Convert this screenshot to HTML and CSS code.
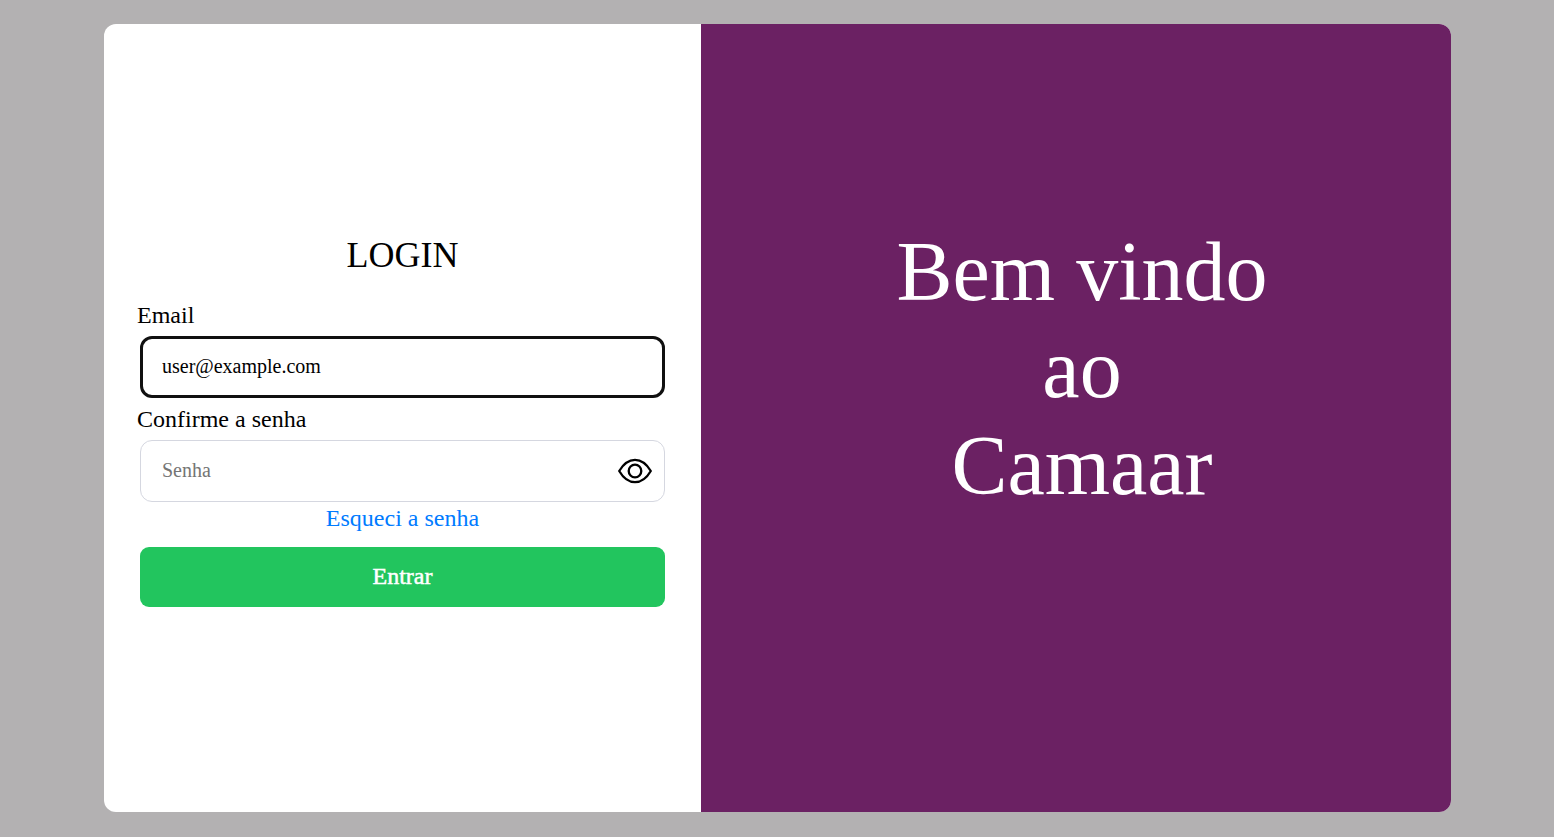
FILE: index.html
```html
<!DOCTYPE html>
<html lang="pt-BR">
<head>
<meta charset="utf-8">
<title>Login - Camaar</title>
<link rel="stylesheet" href="styles.css">
</head>
<body>
<main class="card">
  <section class="login">
    <h1 class="title">LOGIN</h1>
    <form class="form">
      <label class="label" for="email">Email</label>
      <input class="input input-active" id="email" type="email" value="user@example.com">
      <label class="label" for="senha">Confirme a senha</label>
      <div class="field">
        <input class="input" id="senha" type="password" placeholder="Senha">
        <button class="toggle" type="button" aria-label="Mostrar senha">
          <svg class="eye" viewBox="0 0 36 28" fill="none" stroke="#000" stroke-width="2.3" stroke-linejoin="round">
            <path d="M2.200 14C6 7.500 11.500 2.800 18 2.800S30 7.500 33.800 14C30 20.500 24.500 25.200 18 25.200S6 20.500 2.200 14Z"/>
            <circle cx="18" cy="14" r="6.300"/>
          </svg>
        </button>
      </div>
      <a class="forgot" href="#">Esqueci a senha</a>
      <button class="submit" type="submit">Entrar</button>
    </form>
  </section>
  <section class="welcome">
    <p class="message">Bem vindo<br>ao<br>Camaar</p>
  </section>
</main>
</body>
</html>
```
FILE: styles.css
```css
* {
  box-sizing: border-box;
}

body {
  margin: 0;
  min-height: 100vh;
  padding: 24px 103px 25px 104px;
  display: flex;
  background: #b3b1b2;
  color: #000;
  font-family: "Liberation Serif", "Times New Roman", serif;
}

.card {
  flex: 1;
  display: grid;
  grid-template-columns: 597fr 750fr;
  border-radius: 12px;
  overflow: hidden;
  background: #fff;
}

.login {
  padding: 2px 36px 0;
  display: flex;
  flex-direction: column;
  justify-content: center;
}

.title {
  margin: 0 0 22px;
  font-size: 36px;
  line-height: 46px;
  font-weight: 400;
  text-align: center;
}

.form {
  display: flex;
  flex-direction: column;
}

.label {
  margin: 0 0 6px -3px;
  font-size: 24px;
  line-height: 30px;
}

.input {
  width: 100%;
  height: 62px;
  padding: 0 21px;
  border: 1px solid #d5d7e0;
  border-radius: 12px;
  outline: none;
  background: #fff;
  color: #000;
  font-family: inherit;
  font-size: 20px;
}

.input::placeholder {
  color: #757575;
}

.input-active {
  margin-bottom: 6px;
  padding: 0 19px;
  border: 3px solid #101010;
}

.field {
  position: relative;
}

.toggle {
  position: absolute;
  top: 0;
  right: 12px;
  height: 62px;
  padding: 0;
  border: 0;
  background: none;
  display: flex;
  align-items: center;
}

.eye {
  width: 36px;
  height: 28px;
}

.forgot {
  align-self: center;
  margin-bottom: 12px;
  font-size: 24px;
  line-height: 33px;
  color: #007bff;
  text-decoration: none;
}

.submit {
  height: 60px;
  padding: 0;
  border: 0;
  border-radius: 9px;
  background: #22c55e;
  color: #fff;
  font-family: inherit;
  font-size: 24px;
  -webkit-text-stroke: 0.500px #fff;
}

.welcome {
  padding: 0 12px 100px 24px;
  display: flex;
  align-items: center;
  justify-content: center;
  background: #6b2163;
  color: #fff;
}

.message {
  margin: 0;
  font-size: 84px;
  line-height: 97px;
  text-align: center;
}
```
